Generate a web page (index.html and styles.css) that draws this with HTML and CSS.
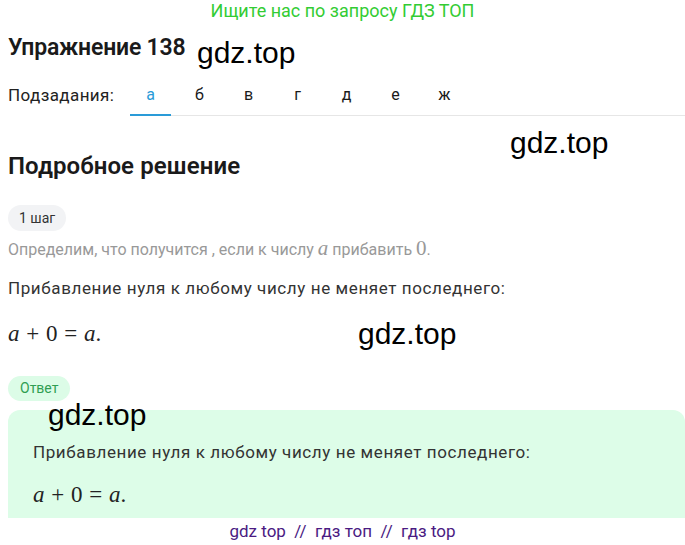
FILE: index.html
```html
<!DOCTYPE html>
<html lang="ru">
<head>
    <meta charset="UTF-8">
    <meta name="viewport" content="width=device-width, initial-scale=1.0">
    <title>Упражнение 138</title>
    <link rel="stylesheet" href="styles.css">
</head>
<body>
    <div class="banner">Ищите нас по запросу ГДЗ ТОП</div>
    <div class="page">
        <h1 class="title">Упражнение 138</h1>
        <div class="subtasks">
            <span class="subtasks-label">Подзадания:</span>
            <div class="tabs">
                <span class="tab active">а</span>
                <span class="tab">б</span>
                <span class="tab">в</span>
                <span class="tab">г</span>
                <span class="tab">д</span>
                <span class="tab">е</span>
                <span class="tab">ж</span>
            </div>
        </div>
        <h2 class="section-title">Подробное решение</h2>
        <span class="pill step">1 шаг</span>
        <p class="hint">Определим, что получится , если к числу <i class="math-var">a</i> прибавить <span class="math-num">0</span>.</p>
        <p class="text">Прибавление нуля к любому числу не меняет последнего:</p>
        <p class="math"><i>a</i> + 0 = <i>a</i>.</p>
        <span class="pill answer-pill">Ответ</span>
        <div class="answer">
            <p class="text">Прибавление нуля к любому числу не меняет последнего:</p>
            <p class="math"><i>a</i> + 0 = <i>a</i>.</p>
        </div>
    </div>
    <div class="footer">gdz top &nbsp;//&nbsp; гдз топ &nbsp;//&nbsp; гдз top</div>

    <span class="mark mark-1">gdz.top</span>
    <span class="mark mark-2">gdz.top</span>
    <span class="mark mark-3">gdz.top</span>
    <span class="mark mark-4">gdz.top</span>
</body>
</html>
```

FILE: styles.css
```css
body {
    margin: 0;
    font-family: Roboto, "Noto Sans", sans-serif;
    color: #1a1a1a;
    background: #fff;
    position: relative;
    min-height: 545px;
}
.banner {
    text-align: center;
    color: #33cc33;
    font-size: 18px;
    line-height: 22px;
}
.page {
    padding-left: 8px;
}
.title {
    font-size: 23px;
    font-weight: 600;
    margin: 12px 0 0;
    line-height: 28px;
    letter-spacing: -0.2px;
}
.subtasks {
    display: flex;
    align-items: stretch;
    margin-top: 16px;
    font-size: 17px;
}
.subtasks-label {
    color: #222;
    padding-top: 7px;
    width: 122px;
    letter-spacing: 0.4px;
}
.tabs {
    display: flex;
    flex: 1;
    border-bottom: 1px solid #e6e6e6;
}
.tab {
    width: 41px;
    margin-right: 8px;
    text-align: center;
    padding: 7px 0 9px;
    line-height: 20px;
    font-size: 16px;
    border-bottom: 2px solid transparent;
    margin-bottom: -1px;
}
.tab.active {
    color: #2a9bd8;
    border-bottom-color: #2a9bd8;
}
.section-title {
    font-size: 24px;
    font-weight: 600;
    margin: 36px 0 0;
    line-height: 28px;
    letter-spacing: 0.1px;
}
.pill {
    display: inline-block;
    border-radius: 13px;
    font-size: 14px;
    line-height: 26px;
    padding: 0 11px;
}
.step {
    background: #f2f3f5;
    color: #333;
    margin-top: 25px;
}
.hint {
    color: #999;
    font-size: 16px;
    margin: 8px 0 0;
    line-height: 22px;
}
.math-var, .math-num {
    font-family: "Liberation Serif", "DejaVu Serif", serif;
    font-size: 21px;
    line-height: 0;
}
.text {
    font-size: 17px;
    letter-spacing: 0.6px;
    color: #333;
    margin: 16px 0 0;
    line-height: 22px;
}
.math {
    font-family: "Liberation Serif", "DejaVu Serif", serif;
    font-size: 23px;
    word-spacing: 1px;
    margin: 21px 0 0;
    line-height: 28px;
    color: #222;
}
.answer-pill {
    background: #dcfce7;
    color: #2f9e52;
    margin-top: 28px;
    padding: 0 12px;
    line-height: 25px;
}
.answer {
    background: #ddfde8;
    border-radius: 12px 12px 0 0;
    margin-top: 9px;
    padding: 21px 25px 9px;
}
.answer .text {
    margin-top: 10px;
}
.answer .math {
    margin-top: 18px;
}
.footer {
    text-align: center;
    color: #4a1a82;
    font-size: 17px;
    line-height: 26px;
}
.mark {
    position: absolute;
    font-family: "Liberation Sans", Arial, sans-serif;
    font-size: 30px;
    color: #000;
    line-height: 34px;
}
.mark-1 { left: 197px; top: 36px; }
.mark-2 { left: 510px; top: 126px; }
.mark-3 { left: 358px; top: 317px; }
.mark-4 { left: 48px; top: 398px; }
```
